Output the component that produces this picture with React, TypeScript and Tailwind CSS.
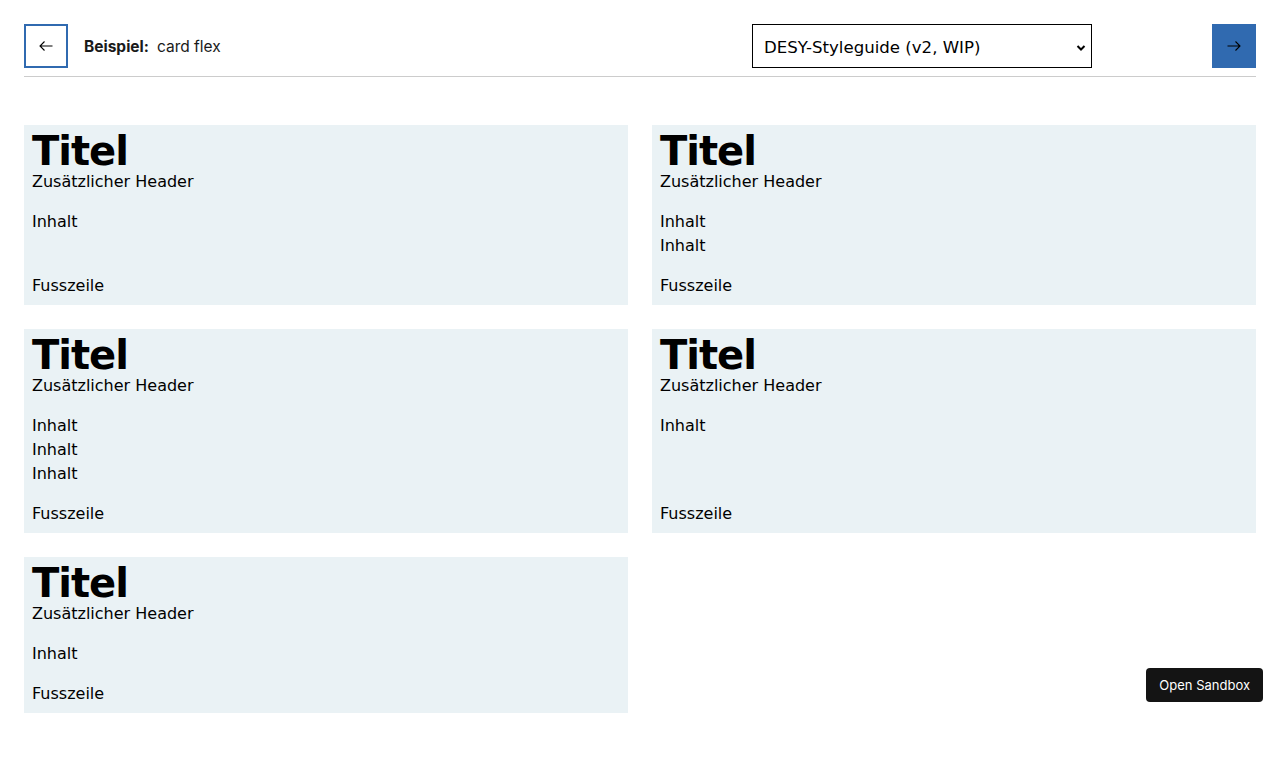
import React from 'react';

const cards = [
  { lines: 1 },
  { lines: 2 },
  { lines: 3 },
  { lines: 1 },
  { lines: 1 },
];

function Arrow({ dir }: { dir: 'left' | 'right' }) {
  return (
    <svg width="14" height="12" viewBox="0 0 14 12" fill="none" stroke="#000" strokeWidth="1.1">
      {dir === 'left' ? (
        <path d="M13.5 6H1M5.5 1.5 1 6l4.5 4.5" />
      ) : (
        <path d="M0.5 6H13M8.5 1.5 13 6l-4.5 4.5" />
      )}
    </svg>
  );
}

function Card({ lines }: { lines: number }) {
  return (
    <div className="flex flex-col bg-[#eaf2f5] px-2 pt-2 pb-[7px] text-black">
      <h2 className="text-[40px] leading-[37px] font-bold tracking-[-1px]">Titel</h2>
      <div className="text-base leading-6">Zusätzlicher Header</div>
      <div className="mt-4 text-base leading-6">
        {Array.from({ length: lines }).map((_, i) => (
          <div key={i}>Inhalt</div>
        ))}
      </div>
      <div className="mt-auto pt-4 text-base leading-6">Fusszeile</div>
    </div>
  );
}

export default function App() {
  return (
    <div className="relative min-h-[761px] bg-white px-6 pt-6" style={{ fontFamily: '"DejaVu Sans", Verdana, sans-serif' }}>
      <header className="flex items-center border-b border-[#cccccc] pb-2">
        <button className="flex h-11 w-11 items-center justify-center border-2 border-[#306ab0] bg-white">
          <Arrow dir="left" />
        </button>
        <div className="ml-4 flex items-center gap-2 pt-[2px] text-[15.5px] text-[#1a1a1a]" style={{ fontFamily: 'Inter, "Liberation Sans", sans-serif' }}>
          <span className="font-bold">Beispiel:</span>
          <span>card flex</span>
        </div>
        <div className="ml-auto mr-[120px] flex h-11 w-[340px] items-center justify-between border border-black bg-white pl-[11px] pr-[5px] pt-[4px] text-[16.6px] text-black">
          <span>DESY-Styleguide (v2, WIP)</span>
          <svg width="10" height="8" viewBox="0 0 10 8" fill="none" stroke="#000" strokeWidth="2">
            <path d="M1.5 2 5 5.5 8.5 2" />
          </svg>
        </div>
        <button className="flex h-11 w-11 items-center justify-center bg-[#306ab0]">
          <Arrow dir="right" />
        </button>
      </header>

      <main className="mt-12 grid grid-cols-2 gap-6">
        {cards.map((c, i) => (
          <Card key={i} lines={c.lines} />
        ))}
      </main>

      <button
        className="absolute right-[17px] top-[668px] h-[34px] rounded bg-[#141414] px-[13px] pt-[2px] text-[13px] text-white"
        style={{ fontFamily: 'Inter, "Liberation Sans", sans-serif' }}
      >
        Open Sandbox
      </button>
    </div>
  );
}
